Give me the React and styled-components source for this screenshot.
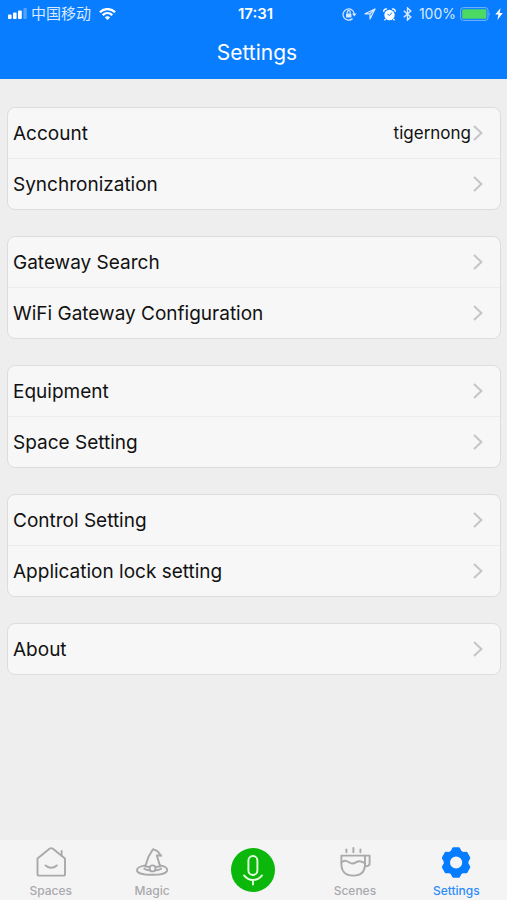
import React from 'react'
import styled, { createGlobalStyle } from 'styled-components'

const GlobalStyle = createGlobalStyle`
  * {
    box-sizing: border-box;
  }
  body {
    margin: 0;
    background-color: #eeeeee;
    font-family: Inter, 'Noto Sans CJK SC', sans-serif;
  }
`

const Page = styled.div`
  display: flex;
  flex-direction: column;
  min-height: 100vh;
  background-color: #eeeeee;
`

const Header = styled.header`
  padding-left: 7px;
  background-color: #097dff;
  color: #ffffff;
`

const StatusBar = styled.div`
  display: grid;
  grid-template-columns: 1fr auto 1fr;
  align-items: center;
  height: 28px;
  padding: 0 4px 0 1px;
  font-size: 14px;
  line-height: 28px;
`

const StatusGroup = styled.div`
  display: flex;
  align-items: center;
  justify-content: ${({ $end }) => ($end ? 'flex-end' : 'flex-start')};
  gap: ${({ $end }) => ($end ? '7px' : '4px')};
  color: #d9eaff;

  svg {
    display: block;
    flex: none;
  }
`

const Carrier = styled.span`
  margin-right: 4px;
  font-size: 15px;
`

const Clock = styled.time`
  font-size: 15px;
  font-weight: 600;
`

const Battery = styled.span`
  display: flex;
  align-items: center;
  gap: 4px;
`

const Title = styled.h1`
  margin: 0;
  height: 51px;
  font-size: 21px;
  font-weight: 400;
  line-height: 50px;
  text-align: center;
`

const Content = styled.main`
  flex: 1;
  display: flex;
  flex-direction: column;
  gap: 26px;
  padding: 28px 6px 28px 7px;
`

const Group = styled.ul`
  margin: 0;
  padding: 0;
  list-style: none;
  background-color: #f7f7f7;
  border: 1px solid #dddddd;
  border-radius: 8px;
`

const Item = styled.li`
  & + & {
    border-top: 1px solid #ececec;
  }
`

const Row = styled.button`
  display: flex;
  align-items: center;
  width: 100%;
  height: 50px;
  padding: 0 17px 0 5px;
  border: none;
  background: none;
  color: #111111;
  font-family: inherit;
  font-size: 19px;
  text-align: left;
  cursor: pointer;
`

const Label = styled.span`
  flex: 1;
`

const Value = styled.span`
  margin-right: 2px;
  font-size: 17px;
`

const TabBar = styled.nav`
  position: sticky;
  bottom: 0;
  display: grid;
  grid-template-columns: repeat(5, 1fr);
  height: 60px;
  background-color: #f4f4f4;
`

const Tab = styled.a`
  display: flex;
  flex-direction: column;
  align-items: center;
  gap: 4px;
  padding-top: 6px;
  color: ${({ $active }) => ($active ? '#2d8cfa' : '#a9a9ac')};
  font-size: 12px;
  font-weight: 500;
  line-height: 18px;
  text-decoration: none;
`

const MicButton = styled.button`
  display: grid;
  place-items: center;
  place-self: center;
  width: 44px;
  height: 44px;
  padding: 0;
  border: none;
  border-radius: 50%;
  background-color: #0ab70a;
  cursor: pointer;
`

const SignalIcon = () => (
  <svg width="19" height="12" viewBox="0 0 19 12" fill="currentColor">
    <rect x="0" y="6.5" width="3.6" height="4.5" rx="1" fill="#fff" />
    <rect x="5" y="4.5" width="3.6" height="6.5" rx="1" fill="#fff" />
    <rect x="10" y="2.5" width="3.8" height="8.5" rx="1" fill="#fff" />
    <rect x="15.4" y="0" width="3.4" height="11" rx="1" opacity="0.35" />
  </svg>
)

const WifiIcon = () => (
  <svg width="17" height="12" viewBox="0 0 17 12" fill="none" stroke="#fff" strokeWidth="2.3">
    <path d="M0.9 4.3C5.2 0 11.8 0 16.1 4.3" />
    <path d="M3.7 7.1C6.5 4.4 10.5 4.4 13.3 7.1" />
    <path d="M8.5 12L5.8 9.2C7.3 7.8 9.7 7.8 11.2 9.2Z" fill="#fff" stroke="none" />
  </svg>
)

const RotationLockIcon = () => (
  <svg width="15" height="14" viewBox="0 0 15 14" fill="none" stroke="currentColor" strokeWidth="1.2">
    <path d="M10.6 11.5A5.6 5.6 0 1 1 12.2 7" />
    <path d="M10 6.4H14.6L12.3 9.4Z" fill="currentColor" stroke="none" />
    <rect x="4" y="6.4" width="5.4" height="4" rx="0.5" fill="currentColor" stroke="none" />
    <path d="M5.2 6.6V5.2A1.5 1.5 0 0 1 8.2 5.2V6.6" />
  </svg>
)

const LocationIcon = () => (
  <svg width="12" height="12" viewBox="0 0 12 12" fill="none" stroke="currentColor" strokeWidth="1.2" strokeLinejoin="round">
    <path d="M11 1L1 5.8H6V11Z" />
    <path d="M11 1L6 5.8" />
  </svg>
)

const AlarmIcon = () => (
  <svg width="13" height="13" viewBox="0 0 13 13" fill="none">
    <circle cx="6.5" cy="7" r="5.2" fill="#fff" />
    <path d="M0.9 3.8A2.2 2.2 0 0 1 4 1.2M12.1 3.8A2.2 2.2 0 0 0 9 1.2" stroke="#fff" strokeWidth="1.5" />
    <path d="M2.6 11L1.5 12.3M10.4 11L11.5 12.3" stroke="#fff" strokeWidth="1.3" />
    <path d="M9 4.6L6.6 7.4L4.4 6.2" stroke="#097dff" strokeWidth="1" />
  </svg>
)

const BluetoothIcon = () => (
  <svg width="9" height="14" viewBox="0 0 9 14" fill="none" stroke="currentColor" strokeWidth="1.4">
    <path d="M0.8 3.8L7.8 10L4.5 13V1L7.8 4L0.8 10.2" />
  </svg>
)

const BatteryIcon = () => (
  <svg width="31" height="14" viewBox="0 0 31 14">
    <rect x="0.6" y="0.6" width="27.4" height="12.8" rx="2.8" fill="none" stroke="#76b4ff" strokeWidth="1" />
    <rect x="2.2" y="2.2" width="24.2" height="9.6" rx="1.2" fill="#4cd964" />
    <path d="M29 5Q30.6 7 29 9Z" fill="#76b4ff" />
  </svg>
)

const BoltIcon = () => (
  <svg width="8" height="12" viewBox="0 0 7 11" fill="#fff">
    <path d="M5 0L0 6H3L2 11L7 4.6H4Z" />
  </svg>
)

const Chevron = () => (
  <svg width="10" height="16" viewBox="0 0 10 16" fill="none" stroke="#c5c5c8" strokeWidth="2">
    <path d="M1 1L8.4 8L1 15" />
  </svg>
)

const HouseIcon = () => (
  <svg width="32" height="32" viewBox="0 0 32 32" fill="none" stroke="currentColor" strokeWidth="1.9" strokeLinecap="round" strokeLinejoin="round">
    <path d="M2.5 12.6L14.8 2.6Q16.2 1.6 17.6 2.6L30 12.6V28Q30 29.6 28.4 29.6H4.1Q2.5 29.6 2.5 28Z" />
    <path d="M26.6 5V9.4" />
    <path d="M10.6 19.4Q16.2 24 21.8 19.4" />
  </svg>
)

const HatIcon = () => (
  <svg width="32" height="32" viewBox="0 0 32 32" fill="none" stroke="currentColor" strokeWidth="1.9" strokeLinecap="round" strokeLinejoin="round">
    <path d="M9.2 20.6L12.6 10.4L17 3.2L21.4 5.2L25.2 9.8L20.8 9.4L24.2 20.6" />
    <path d="M9.2 19.4C4 20.2 1 22 1 24.2C1 27 7.8 28.8 16.4 28.8C25 28.8 31.2 27 31.2 24.2C31.2 22 28.8 20.2 24.2 19.4" />
    <path d="M9.2 20.4L13.6 21M24.2 20.4L19.6 21M8.2 22.8Q10.6 24.4 14.2 24.2M25.2 22.8Q22.6 24.4 19 24.2" />
    <circle cx="16.6" cy="22.4" r="3" />
  </svg>
)

const CupIcon = () => (
  <svg width="32" height="32" viewBox="0 0 32 32" fill="none" stroke="currentColor" strokeWidth="1.9" strokeLinecap="round" strokeLinejoin="round">
    <path d="M2.4 9.6H26V18C26 25.4 22 29.6 14.2 29.6C6.4 29.6 2.4 25.4 2.4 18Z" />
    <path d="M26 9.6H30.6V17.6Q30.6 20.4 25.8 20.4" />
    <path d="M2.6 16.4C5.8 13.4 8.4 15.2 11.4 17C15.4 19 17.4 14.8 20.6 15.2Q23.6 15.4 25.8 17.2" />
    <path d="M7.4 3.4V6.2M14.4 2V6.2M21.4 3.4V6.2" />
  </svg>
)

const GearIcon = () => (
  <svg width="32" height="32" viewBox="0 0 32 32">
    <path
      fill="#067dff"
      stroke="#067dff"
      strokeWidth="2.6"
      strokeLinejoin="round"
      fillRule="evenodd"
      d="M13.4 2.6H18.8L20.4 5.8L22.8 7.2L26.2 7L29 12L27.2 15V18L29 21L26.2 26L22.8 25.8L20.4 27.2L18.8 30.4H13.4L11.8 27.2L9.4 25.8L6 26L3.2 21L5 18V15L3.2 12L6 7L9.4 7.2L11.8 5.8ZM16.1 9.1A7.4 7.4 0 1 0 16.1 23.9A7.4 7.4 0 1 0 16.1 9.1Z"
    />
  </svg>
)

const MicIcon = () => (
  <svg width="24" height="32" viewBox="0 0 24 32" fill="none" stroke="#e4ffe0" strokeWidth="1.9" strokeLinecap="round">
    <rect x="7.4" y="2" width="9" height="19" rx="4.5" />
    <path d="M3 21.4Q6.6 26 12 26Q17.4 26 21 21.4M12 26V30.6" />
  </svg>
)

const groups = [
  [{ label: 'Account', value: 'tigernong' }, { label: 'Synchronization' }],
  [{ label: 'Gateway Search' }, { label: 'WiFi Gateway Configuration' }],
  [{ label: 'Equipment' }, { label: 'Space Setting' }],
  [{ label: 'Control Setting' }, { label: 'Application lock setting' }],
  [{ label: 'About' }],
]

function App() {
  return (
    <Page>
      <GlobalStyle />
      <Header>
        <StatusBar>
          <StatusGroup>
            <SignalIcon />
            <Carrier>中国移动</Carrier>
            <WifiIcon />
          </StatusGroup>
          <Clock>17:31</Clock>
          <StatusGroup $end>
            <RotationLockIcon />
            <LocationIcon />
            <AlarmIcon />
            <BluetoothIcon />
            <Battery>
              100%
              <BatteryIcon />
              <BoltIcon />
            </Battery>
          </StatusGroup>
        </StatusBar>
        <Title>Settings</Title>
      </Header>

      <Content>
        {groups.map((items) => (
          <Group key={items[0].label}>
            {items.map(({ label, value }) => (
              <Item key={label}>
                <Row type="button">
                  <Label>{label}</Label>
                  {value && <Value>{value}</Value>}
                  <Chevron />
                </Row>
              </Item>
            ))}
          </Group>
        ))}
      </Content>

      <TabBar>
        <Tab href="#spaces">
          <HouseIcon />
          Spaces
        </Tab>
        <Tab href="#magic">
          <HatIcon />
          Magic
        </Tab>
        <MicButton type="button" aria-label="Voice control">
          <MicIcon />
        </MicButton>
        <Tab href="#scenes">
          <CupIcon />
          Scenes
        </Tab>
        <Tab href="#settings" $active>
          <GearIcon />
          Settings
        </Tab>
      </TabBar>
    </Page>
  )
}

export default App
